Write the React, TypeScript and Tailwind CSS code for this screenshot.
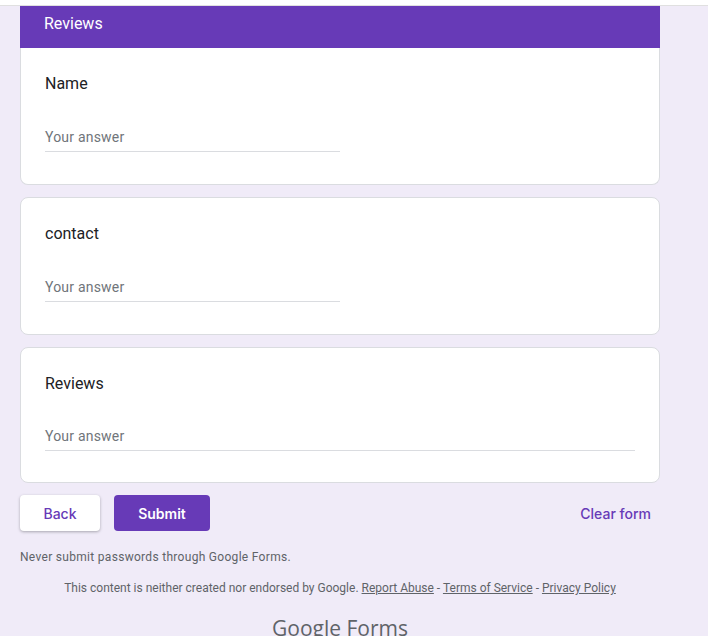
import React from "react";

const Question = ({ label, wide }: { label: string; wide?: boolean }) => (
  <div className={`bg-white border border-[#dadce0] rounded-lg px-6 pt-6 ${wide ? "h-[136px]" : "h-[138px]"}`}>
    <div className="text-[16px] leading-6 text-[#202124]">{label}</div>
    <div
      className={`mt-[16px] border-b border-[#dadce0] text-[14px] leading-5 tracking-[0.2px] text-[#70757a] ${
        wide ? "w-[590px] h-[39px] pt-[14px]" : "w-[295px] h-[40px] pt-[15px]"
      }`}
    >
      Your answer
    </div>
  </div>
);

export default function App() {
  return (
    <div className="h-[636px] overflow-hidden bg-[#f0ebf8] font-['Roboto',sans-serif]">
      <div className="h-[6px] bg-white border-b border-[#e0e0e0]" />

      <div className="ml-5 w-[640px] flex flex-col">
        <div className="bg-white border border-t-0 border-[#dadce0] rounded-b-lg h-[179px]">
          <div className="-mx-px h-[42px] bg-[#673ab7] px-6 text-white text-[16px] leading-[36px]">
            Reviews
          </div>
          <div className="px-6 pt-6">
            <div className="text-[16px] leading-6 text-[#202124]">Name</div>
            <div className="mt-[22px] w-[295px] h-[34px] pt-[9px] border-b border-[#dadce0] text-[14px] leading-5 tracking-[0.2px] text-[#70757a]">
              Your answer
            </div>
          </div>
        </div>

        <div className="mt-3">
          <Question label="contact" />
        </div>
        <div className="mt-3">
          <Question label="Reviews" wide />
        </div>

        <div className="mt-3 flex items-center font-['Inter',sans-serif]">
          <button className="w-[80px] h-9 bg-white rounded text-[14px] font-medium text-[#673ab7] shadow-[0_1px_3px_rgba(60,64,67,0.4)]">
            Back
          </button>
          <button className="ml-[14px] w-[96px] h-9 bg-[#673ab7] rounded text-[14px] font-semibold text-white">
            Submit
          </button>
          <button className="ml-auto mr-[9px] text-[14px] font-medium text-[#673ab7]">
            Clear form
          </button>
        </div>

        <div className="mt-[18px] text-[12px] leading-4 tracking-[0.3px] text-[#5f6368]">
          Never submit passwords through Google Forms.
        </div>

        <div className="mt-[15px] text-center text-[12px] leading-4 text-[#5f6368]">
          This content is neither created nor endorsed by Google.{" "}
          <a className="underline">Report Abuse</a> - <a className="underline">Terms of Service</a> -{" "}
          <a className="underline">Privacy Policy</a>
        </div>

        <div className="mt-[18px] text-center font-['Open_Sans',sans-serif] text-[#5f6368] text-[21px] leading-7">
          <span className="font-medium">Google</span> <span>Forms</span>
        </div>
      </div>
    </div>
  );
}
